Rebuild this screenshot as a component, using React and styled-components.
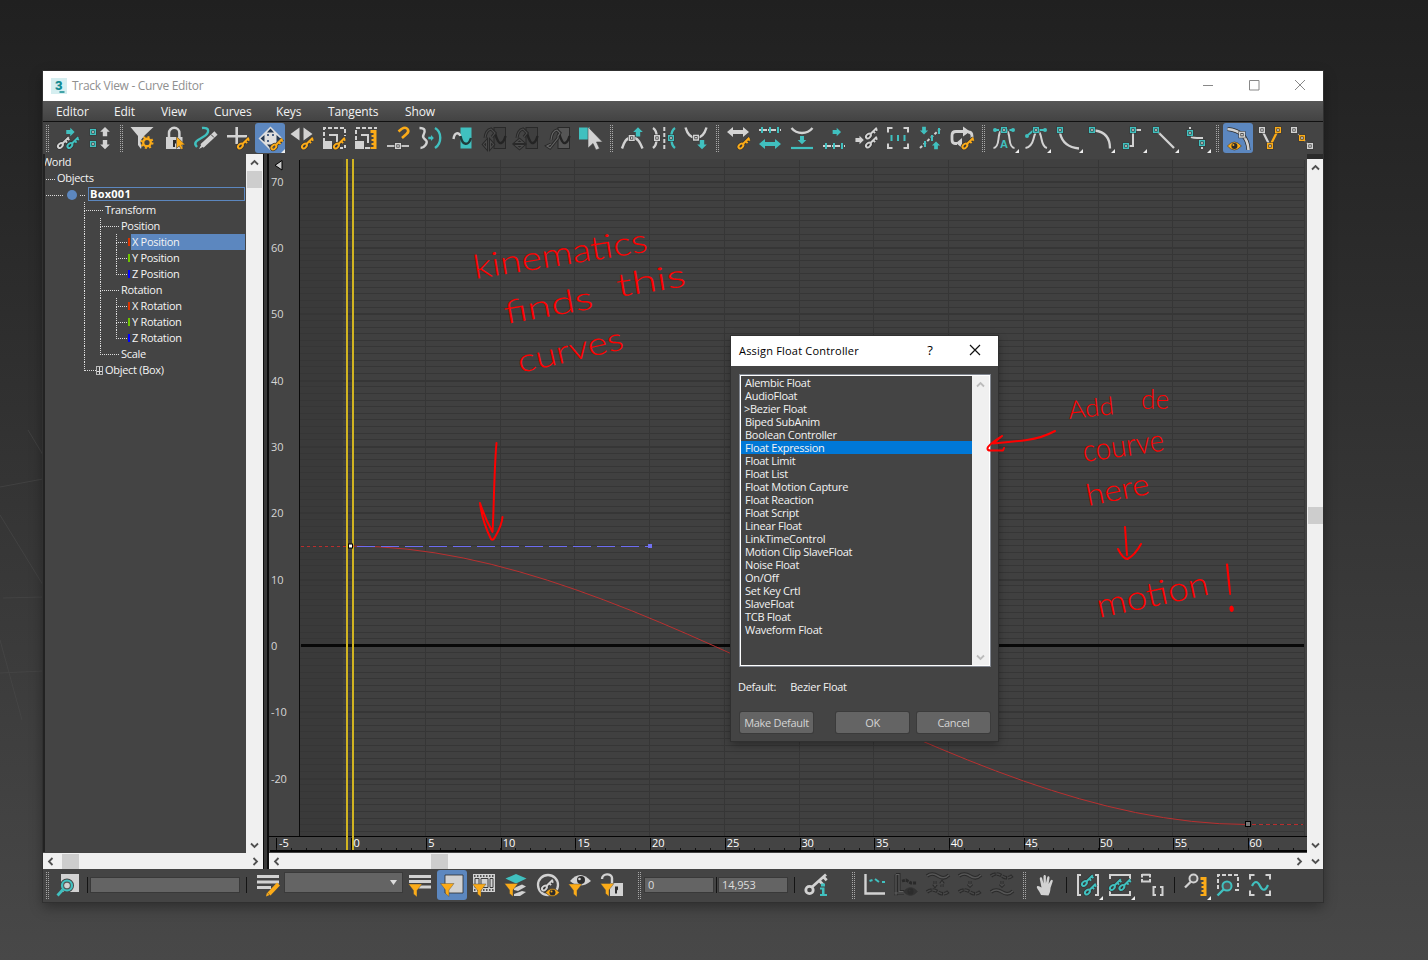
import React from "react";
import styled, { createGlobalStyle, css } from "styled-components";

const G = "#d2d2d2";
const T = "#40c0bf";
const O = "#fbab18";
const D = "#2c2c2c";
const UI = `"Open Sans", "Noto Sans", sans-serif`;

const Global = createGlobalStyle`
  html, body { margin: 0; padding: 0; overflow: hidden; }
  body { font-family: ${UI}; background: #333; }
  * { box-sizing: border-box; }
`;

const Desktop = styled.div`
  position: relative;
  width: 1428px;
  height: 960px;
  padding: 71px 0 0 43px;
  overflow: hidden;
  background: linear-gradient(#202020, #484848);
`;
const Overlay = styled.svg`
  position: absolute;
  left: 0;
  top: 0;
  pointer-events: none;
`;
const Window = styled.main`
  position: relative;
  display: flex;
  flex-direction: column;
  width: 1280px;
  height: 831px;
  background: #444;
  box-shadow: 0 0 0 1px #303030, 0 5px 12px rgba(0, 0, 0, 0.35);
`;
const TitleBar = styled.header`
  display: flex;
  align-items: center;
  height: 30px;
  padding: 0 17px 0 8px;
  background: #fff;
  color: #8f8f8f;
  font-size: 12px;
  letter-spacing: -0.3px;
`;
const Title = styled.span`
  flex: 1;
  padding: 0 0 2px 5px;
`;
const Caption = styled.div`
  display: flex;
  gap: 34px;
  padding-bottom: 2px;
`;
const MenuBar = styled.nav`
  display: flex;
  height: 21px;
  padding-left: 13px;
  border-bottom: 1px solid #111;
  background: linear-gradient(#565656, #434343);
  color: #f2f2f2;
  font-size: 12px;
  line-height: 21px;
  letter-spacing: -0.12px;
`;
const MenuItem = styled.span`
  width: ${(p) => p.$w}px;
`;
const Toolbar = styled.div`
  display: flex;
  align-items: center;
  flex: none;
  height: ${(p) => p.$h}px;
`;
const Tool = styled.div`
  width: 32px;
  height: 32px;
  flex: none;
  ${(p) =>
    p.$active &&
    css`
      background: #5c87bf;
      background-clip: content-box;
      padding: 1px;
      svg { margin: -1px; }
      border-radius: 4px;
    `}
  svg { display: block; }
`;
const Grip = styled.div`
  flex: none;
  width: 3px;
  height: 27px;
  margin: 0 ${(p) => p.$r}px 0 ${(p) => p.$l}px;
  border: 0 dotted #a8a8a8;
  border-width: 0 1px;
`;
const Divider = styled.div`
  flex: none;
  width: 1px;
  height: 16px;
  background: #141414;
  margin: 0 ${(p) => p.$r}px 0 ${(p) => p.$l}px;
`;
const Field = styled.div`
  flex: none;
  width: ${(p) => p.$w}px;
  height: 16px;
  background: #646464;
  border: 1px solid #393939;
  color: #ddd;
  font-size: 11px;
  line-height: 14px;
  padding-left: 3px;
  letter-spacing: -0.1px;
`;
const Combo = styled.div`
  display: flex;
  align-items: center;
  justify-content: flex-end;
  width: 119px;
  height: 21px;
  margin: -5px 1px 0 0;
  padding-right: 4px;
  background: #646464;
  border: 1px solid #3a3a3a;
`;
const Body = styled.div`
  display: flex;
  height: 715px;
`;
const Column = styled.div`
  display: flex;
  flex-direction: column;
  width: ${(p) => p.$w}px;
`;
const TreeArea = styled.div`
  display: flex;
  height: 699px;
`;
const Tree = styled.div`
  width: 203px;
  height: 698px;
  overflow: hidden;
  border-left: 2px solid #222;
  background: #444;
  color: #f4f4f4;
  font-size: 11px;
  letter-spacing: -0.3px;
`;
const TreeRow = styled.div`
  display: flex;
  height: 16px;
  line-height: 16px;
  padding-left: ${(p) => p.$pad}px;
  white-space: nowrap;
`;
const RootLabel = styled.span`
  margin-left: -3px;
`;
const GuideCell = styled.span`
  display: flex;
  flex-direction: column;
  width: ${(p) => p.$w || 16}px;
  span { height: 9px; border-left: 1px dotted #ddd; }
  span:first-child { ${(p) => p.$stub && "border-bottom: 1px dotted #ddd;"} }
  span:last-child { height: 7px; ${(p) => p.$last && "border-color: transparent;"} }
`;
const Label = styled.span`
  padding-left: ${(p) => p.$gap ?? 2}px;
`;
const Dots = styled.i`
  height: 1px;
  width: ${(p) => p.$w}px;
  margin: 9px 0 0 0;
  border-top: 1px dotted #ddd;
`;
const Track = styled.span`
  flex: 1;
  display: flex;
  height: 16px;
  padding-left: 1px;
  ${(p) => p.$on && css`
    background: #5c87bf;
    margin-right: 1px;
  `}
`;
const Swatch = styled.i`
  width: 2px;
  height: 8px;
  margin: 4px 1px 0 1px;
  background: ${(p) => p.$c};
`;
const Dot = styled.i`
  width: 10px;
  height: 10px;
  margin: 4px 3px 0 4px;
  border-radius: 50%;
  background: #5c87bf;
`;
const Named = styled.b`
  flex: 1;
  height: 14px;
  margin: 1px 1px 0 3px;
  padding-left: 1px;
  border: 1px solid #5c87bf;
  line-height: 12px;
  color: #fff;
  letter-spacing: 0.25px;
`;
const Expander = styled.i`
  display: flex;
  width: 7px;
  height: 9px;
  margin-top: 4px;
  border: 1px solid #bbb;
  &::before { content: ""; width: 5px; height: 4px; border-bottom: 1px solid #ddd; }
  &::after { content: ""; width: 1px; height: 7px; margin-left: -3px; background: #ddd; }
`;
const ScrollBar = styled.div`
  display: flex;
  flex: none;
  align-items: center;
  flex-direction: ${(p) => (p.$v ? "column" : "row")};
  justify-content: space-between;
  width: ${(p) => p.$w}px;
  height: ${(p) => p.$h}px;
  background: #f0f0f0;
  padding: ${(p) => (p.$v ? "4px 0 3px" : "0 3px")};
`;
const Thumb = styled.div`
  width: ${(p) => (p.$v ? 15 : 17)}px;
  height: ${(p) => (p.$v ? 17 : 15)}px;
  background: #cdcdcd;
  margin: ${(p) => (p.$v ? `${p.$at}px 0 auto` : `0 auto 0 ${p.$at}px`)};
`;
const Splitter = styled.div`
  width: 6px;
  background: #3a3a3a;
  border: 0 solid #0d0d0d;
  border-width: 0 2px 0 1px;
`;
const RightRail = styled.div`
  width: 16px;
  border-top: 5px solid #2b2b2b;
  background: #f0f0f0;
`;
const Dialog = styled.section`
  position: absolute;
  left: 731px;
  top: 336px;
  width: 267px;
  height: 405px;
  background: #444;
  box-shadow: 0 0 0 1px #303030, 0 3px 9px rgba(0, 0, 0, 0.4);
  color: #f3f3f3;
  font-size: 11px;
  letter-spacing: -0.27px;
`;
const DialogTitle = styled.div`
  display: flex;
  align-items: center;
  height: 30px;
  padding: 0 17px 2px 8px;
  background: #fff;
  color: #000;
  letter-spacing: 0.2px;
  span { flex: 1; }
  b { font-weight: 400; font-size: 13px; margin-right: 36px; }
`;
const ListFrame = styled.div`
  display: flex;
  width: 252px;
  height: 293px;
  margin: 8px 0 0 8px;
  border: 1px solid #828790;
  background: #fff;
  padding: 1px;
`;
const List = styled.ul`
  flex: 1;
  margin: 0;
  padding: 0;
  list-style: none;
  background: #444;
`;
const Item = styled.li`
  height: 13px;
  line-height: 13px;
  padding-left: ${(p) => (p.$mark ? 3 : 4)}px;
  white-space: nowrap;
  background: ${(p) => (p.$on ? "#0078d7" : "transparent")};
`;
const DefaultRow = styled.div`
  display: flex;
  gap: 14px;
  padding: 12px 0 0 7px;
  line-height: 16px;
`;
const Buttons = styled.div`
  display: flex;
  padding: 17px 0 0 9px;
`;
const Button = styled.button`
  width: 73px;
  height: 21px;
  padding: 0;
  margin-right: ${(p) => p.$r || 0}px;
  border: 0;
  border-radius: 2px;
  background: #646464;
  box-shadow: 0 0 0 1px #3b3b3b;
  color: #d4d4d4;
  font: 11px ${UI};
  letter-spacing: -0.3px;
`;

const Key = ({ x, y, c = O }) => (
  <g transform={`translate(${x} ${y})`} fill="none">
    {["#333", c].map((s, i) => (
      <g key={i} stroke={s} strokeWidth={i ? 2 : 3.4}>
        <ellipse cx="3.4" cy="9" rx="2.8" ry="1.9" transform="rotate(-45 3.4 9)" />
        <path d="M5.200 7.200L11.800 .7M8.200 4.200l1.900 1.900M10.600 1.900l1.700 1.700" />
      </g>
    ))}
  </g>
);
const Sq = ({ x, y, c = G, f = D }) => (
  <g>
    <rect x={x - 3.5} y={y - 3.5} width="7" height="7" fill={f} />
    <rect x={x - 2.3} y={y - 2.3} width="4.6" height="4.6" fill={f} stroke={c} strokeWidth="1.500" />
    <rect x={x - 0.8} y={y - 0.8} width="1.6" height="1.6" fill="#eee" />
  </g>
);
const Arrow = ({ x, y, r = 0, c = T, s = 1 }) => (
  <path transform={`translate(${x} ${y}) rotate(${r}) scale(${s})`} d="M-4.5-2.2H0V-4.8L4.8 0L0 4.8V2.2H-4.5z" fill={c} />
);
const Dbl = ({ y, c }) => (
  <path transform={`translate(16 ${y})`} d="M-11 0l6-5v3h10v-3l6 5-6 5v-3H-5v3z" fill={c} />
);
const L = ({ d, c = G, w = 2, ...r }) => <path d={d} fill="none" stroke={c} strokeWidth={w} {...r} />;
const F = ({ d, c = G, ...r }) => <path d={d} fill={c} {...r} />;
const Corner = () => <F d="M31 27v4h-4z" c="#eee" />;
const Funnel = ({ x = 4, y = 15 }) => <F d={`M${x} ${y}h13.500l-5 6.500v6.500l-3.500-3v-3.500z`} c={O} stroke="#444" strokeWidth=".4" />;
const EyeO = ({ x, y, c = O }) => (
  <g transform={`translate(${x} ${y})`}>
    <path d="M-7 0Q0-8 7 0Q0 8-7 0z" fill={c} stroke="#333" strokeWidth=".6" />
    <circle r="3" fill={D} /><circle cx="-1" cy="-1" r="1" fill={c} />
  </g>
);
const Seg = ({ y }) => (
  <g><L d={`M5 ${y}H27`} w="1.8" strokeDasharray="2 1 5 1" /><L d={`M8 ${y - 3}v6M16 ${y - 3}v6M24 ${y - 3}v6`} c={T} /></g>
);
const Ghost = ({ d, c = "#4b4b4b" }) => (<g><L d={d} c="#292929" w="3" /><L d={d} c={c} w="1.100" /></g>);
const Wave = ({ y, dash }) => {
  const d = `M5 ${y - 1}q5-4 11 0t11-1`;
  return <g><L d={d} c="#2a2a2a" w="3.6" strokeDasharray={dash ? "5 1" : undefined} /><L d={d} c={dash ? "#484848" : "#555"} w="1.6" strokeDasharray={dash ? "4 2" : undefined} /></g>;
};
const Snap = ({ fill }) => (<>
  <rect x="16" y="5.5" width="11.5" height="21" fill={fill} stroke="#292929" />
  <L d="M17 11q3 11 6 10t4.500-7" c="#242424" w="2.4" />
</>);

const I = {
  assign: <><Arrow x={19.3} y={10} s={0.9} /><Key x={6} y={14.5} c={G} /><Key x={15.5} y={14.5} c={T} /></>,
  filters: <><Sq x={10} y={10} c={T} /><Sq x={10} y={22} c={T} /><Arrow x={22} y={9.7} r={-90} c={G} /><Arrow x={22} y={22.5} r={90} c={G} /></>,
  gear: <><F d="M4.5 5h23L18 14l-3 13-3-4v-9z" /><circle cx="21" cy="20.5" r="6.5" fill="#444" /><circle cx="21" cy="20.5" r="3.8" fill="none" stroke={O} strokeWidth="2.4" /><circle cx="21" cy="20.5" r="5.5" fill="none" stroke={O} strokeWidth="2" strokeDasharray="2 2.3" /></>,
  lock: <><L d="M11 15v-4a5.2 5.2 0 0 1 10.400 0v4" w="2.5" /><F d="M8 15h16.500v12H8z" /><F d="M15 18h3v3l-1 1v3h-2z" c={D} /><F d="M18.500 14.500v12l2.700-2.600 2 3.600 2-1-1.700-3.500 3.800-.2z" c={O} stroke={D} strokeWidth=".5" /></>,
  draw: <><L d="M12 6c8-1 8 5 1 9s-10 6-6 10" c={T} w="2.4" /><L d="M26 11L12 24" w="4.6" /><F d="M12.500 20.500l3 3-6.500 3.500z" /><L d="M21 12.500l3 3" c="#444" w="1" /></>,
  add: <><L d="M14.700 5v17M5 14.300h20" w="2.6" /><Key x={15} y={15} /></>,
  move: <><F d="M16.500 4.500l12 12-12 12-12-12z" c="#dedede" /><F d="M13 10.500l3.500-4 3.500 4zM10.500 13l-4 3.500 4 3.500zM22.500 13l4 3.500-4 3.500zM13 22.500l3.500 4 3.500-4z" c="#26384f" /><L d="M13 13h2M18 13h2M13 19h2" c="#4b6285" /><Key x={16.500} y={16} /><Corner /></>,
  slide: <><F d="M13.500 5.500v13l-9-6.500zM17.500 5.500v13l9-6.500z" /><Key x={15} y={15} /></>,
  scale: <><L d="M6 20V6H27V14" strokeDasharray="4 2" /><F d="M5 19h9v8H5z" /><L d="M11 13h8v8" /><L d="M22 26h5v-3" strokeDasharray="3 2" /><Key x={15} y={15} /></>,
  scaleVal: <><L d="M6 18V6H27" strokeDasharray="4 2" /><F d="M5 19h9v8H5z" /><L d="M11 13h7v8" /><L d="M15 26h5" /><path d="M20.500 8h6v19h-6v-2h3v-2h-2v-2h2v-2h-2v-2h2v-2h-2v-2h2v-2h-3z" fill={O} /></>,
  snap: <><L d="M16.500 9.500l3-2.500q4-2.500 6 0t-1 5l-4.500 4" c={O} w="2.6" /><L d="M5 24h22" w="1.8" /><Sq x={16} y={24} /></>,
  ooR: <><L d="M5.500 6c6 0 6 3 4 7-2 3 2 4 3 6s-2 7-6 7" w="2.400" /><Arrow x={17} y={16} s={0.6} /><L d="M21 6c7 4 7 15 0 20" c={T} w="2.400" /></>,
  region: <><F d="M14.500 5.500h11v21h-11z" c={T} /><L d="M7.500 17c1-7 5-7 7-3" w="2.4" c={G} /><L d="M14.500 14c2 10 8 10 10.500 2" c="#1f3c3c" w="2.4" /></>,
  d1: <><Snap fill="#3f3f3f" /><Ghost d="M7 16q1-8 6-9l4 4-3 4" /><Ghost d="M8.500 19l-3 3.500 3 3.500zM12.500 19l3 3.500-3 3.500z" /></>,
  d2: <><Snap fill="#3f3f3f" /><Ghost d="M7 16q1-8 6-9l4 4-3 4" /><Ghost d="M6 20.500l3.500-3 3.500 3zM6 23.500l3.500 3 3.500-3z" /></>,
  d3: <><Snap fill="#565656" /><Ghost c="#666" d="M9 18q1-9 6-10l3 3-2 3v2L8 26l-3-2 4-2" /></>,
  sel: <><F d="M5 5.500h11v12H5z" c={T} /><F d="M14 5v21l5-4.500 3 6.500 3.500-1.500-3-6.500h6z" stroke="#444" strokeWidth=".6" /></>,
  t1: <><L d="M6 26.500c2-6 4-11 10-11s8 5 10.500 11" w="2.4" /><Sq x={15.7} y={16} /><Arrow x={22} y={10} r={-90} /></>,
  t2: <><L d="M5 6c5 3 5 16 0 20" w="2.4" /><Sq x={9} y={16} /><L d="M16.300 5v22" strokeDasharray="4 2" /><L d="M27 6c-5 3-5 16 0 20" c={T} w="2.400" /><Sq x={23} y={16} c={T} /></>,
  t3: <><L d="M5.500 5.500q3 10.500 10.500 10.500t10.500-10.500" w="2.400" /><Sq x={16} y={15.700} /><Arrow x={22} y={22.500} r={90} /></>,
  hs: <><Dbl y={10} c={G} /><Key x={15.500} y={15} /></>,
  al: <><Seg y={8} /><Dbl y={22} c={T} /></>,
  ground: <><L d="M5.500 6q4 5 10.500 5T26.500 6" w="2.300" /><Arrow x={16} y={18} r={90} s={0.9} /><L d="M5 26h22" c={T} w="2.200" /></>,
  shift: <><Arrow x={18.700} y={10} s={0.9} /><Seg y={24} /></>,
  keys: <><Arrow x={9.500} y={18} c={G} s={0.9} /><Key x={15} y={5} c={G} /><Key x={15} y={14} c={G} /></>,
  frame3: <><L d="M10.500 6H6v4.500M21.500 6H26v4.500M10.500 26H6v-4.500M21.500 26H26v-4.500" /><L d="M9.500 13v6M16 13v6M22.500 13v6" c={T} /></>,
  rand: <><Arrow x={10} y={8.500} r={90} s={0.85} /><Arrow x={22} y={23.500} r={-90} s={0.85} /><L d="M6 26L26 7" w="2" strokeDasharray="3 2" /><L d="M11 19v6M18 13v6M25 6v6" c={T} /></>,
  loop: <><L d="M11 21.500H9q-3 0-3-4v-4q0-4 4-4h8M22 10q4 0 4 4v4" w="2.800" /><F d="M17 4.500l7 5-7 5zM16 16l-6 5 6 5z" /><Key x={15.500} y={15} /></>,
  auto: <><L d="M8 8h16" c={T} strokeDasharray="3 1.500" /><circle cx="7" cy="8" r="2" fill={T} /><circle cx="25" cy="8" r="2" fill={T} /><L d="M5.500 26q4 0 5-9t3-7M26.500 26q-4 0-5-9t-3-7" /><Sq x={16} y={8} c={T} /><text x="16" y="26" textAnchor="middle" fontFamily="Liberation Sans, sans-serif" fontWeight="bold" fontSize="11" fill={T}>A</text><Corner /></>,
  spline: <><L d="M8 13l6-5h10" c={T} /><circle cx="7" cy="14" r="2" fill={T} /><circle cx="25" cy="8" r="2" fill={T} /><L d="M5.500 26q6-1 8-9t3-7M27 26q-4-1-5.500-9t-3.500-7" /><Sq x={16} y={8} c={T} /><Corner /></>,
  fast: <><L d="M8 11q3 14 19 15.500" w="2.300" /><Sq x={8} y={8} c={T} /><Corner /></>,
  slow: <><L d="M11 8.500q15 2 15 18" w="2.300" /><Sq x={8} y={8} c={T} /><Corner /></>,
  step: <><L d="M20 8h5M17 11v13h-4" /><Sq x={17} y={8} c={T} /><Sq x={10} y={24} c={T} /><Corner /></>,
  linear: <><L d="M10 10l16 16" w="2.300" /><Sq x={8} y={8} c={T} /><Corner /></>,
  smooth: <><L d="M10 5v2M11 15q3 1 6 1h6M22 25v2" /><Sq x={10} y={11} c={T} /><Sq x={22} y={21} c={T} /><Corner /></>,
  show: <><L d="M5.500 7q20 2 21 21" c={D} w="4" /><L d="M5.500 7q20 2 21 21" w="2.600" /><Sq x={20} y={12.700} /><EyeO x={12.400} y={24} /></>,
  tanv: <><L d="M9 10l6 12" w="2.200" /><L d="M23 10l-6 12" c={O} w="2.200" /><Sq x={8} y={8} /><Sq x={24} y={8} c={O} /><Sq x={16} y={24} c={O} /></>,
  lockT: <><L d="M8 8l16 16" w="1.500" strokeDasharray="1 2" /><Sq x={8} y={8} /><Sq x={16} y={16} c={O} /><Sq x={24} y={24} /></>,

  zoomSel: <><F d="M9 5h18v18H9z" /><circle cx="15" cy="16.500" r="5" fill="#c9d5d5" stroke="#444" strokeWidth="4" /><circle cx="15" cy="16.500" r="5" fill="#555" stroke={T} strokeWidth="2.200" /><circle cx="15" cy="16.500" r="2.800" fill={G} /><L d="M11 20.500L5.500 26.500" c={T} w="2.800" /></>,
  edit: <><F d="M5 6h22v3H5zM5 11.500h22v3H5zM5 17h14v3H5z" /><L d="M26.500 15L17 25" c={O} w="4" /><F d="M15 23.500l2.500 2.500-3.500 1.500z" c={O} /></>,
  fList: <><F d="M5 6h22v3H5zM5 11h22v3H5zM14 16.500h13v3H14z" /><Funnel x={4.500} /></>,
  fSel: <><F d="M9 6h18v18H9z" stroke={D} strokeWidth=".8" /><Funnel x={4.500} y={14.500} /></>,
  fAnim: <><F d="M5 5h22v18H5z" /><L d="M6 7h20M6 21h20" c={D} strokeDasharray="1.500 1.500" w="1.400" /><F d="M7 9.500h4v9H7zM13 9.500h7v9h-7zM22 9.500h3v9h-3z" c="#d2d2d2" stroke={D} strokeWidth=".9" /><Funnel x={4.500} /></>,
  fLayer: <><F d="M5.500 9.500L16 5l10.500 4.500L16 14.500z" c={T} /><F d="M14 19l8-3.500 4 2-8 4.500-4-1zM14 25l8-3 4 1-6 4h-6z" /><Funnel x={4.500} y={14.500} /></>,
  fKey: <><circle cx="16" cy="16" r="10" fill="none" stroke={G} strokeWidth="2.300" /><Key x={9} y={10} c={G} /><EyeO x={20.500} y={23.500} c={O} /></>,
  fEye: <><F d="M6 12Q16 0 27 12Q16 21 6 12z" /><circle cx="17" cy="11" r="4" fill={D} /><circle cx="15.500" cy="10" r="1.300" fill={G} /><Funnel x={4.500} /></>,
  fLock: <><L d="M6 10c0-6 10-6 10-1v5" w="2.400" /><F d="M14 14h13v13H14z" /><F d="M19 17.500h3v3l-1 1v3h-2z" c={D} /><Funnel x={4.500} y={14.500} /></>,
  info: <><circle cx="9.500" cy="21" r="3.700" fill="none" stroke={G} strokeWidth="2.800" /><L d="M12 18L26 5.500M19.500 12l3.500 3.500M23.500 8l3.200 3.200" w="2.800" /><F d="M21 14.500h4v3h-4zM20 18.500h4.500v6.500H27v2h-7v-2h2v-4.500h-2z" c={T} /></>,
  g1: <><L d="M7.500 5v19.500H27" w="2.400" /><L d="M11.500 12l3-1M17 10l4 3M24 13h3" c={T} /></>,
  g2: <><Ghost c="#606060" d="M6 5.500h3v17h5M4.500 24h9.500M6 5.500v21" /><L d="M12 12l4-1 5 3h6" c="#292929" w="2.800" strokeDasharray="3 1" /><EyeO x={20.500} y={22.500} c="#333" /></>,
  g3: <><Wave y={8} /><Ghost d="M13 12v5M11.500 15l1.500 2 1.500-2M20 18v-5M18.500 15l1.500-2 1.500 2" /><Wave y={24} dash /></>,
  g4: <><Wave y={8} /><Ghost d="M16 12v5M14 15l2 2 2-2" /><Wave y={24} dash /></>,
  g5: <><Wave y={8} dash /><Ghost d="M16 12v5M14 15l2 2 2-2" /><Wave y={24} /></>,
  hand: <F d="M12 26c-2-5-5-7-4-8.500s4 1 4.500 1L10.800 10c-.3-2 2-2.200 2.400-.5l1.300 5V7.500c0-2 2.300-2 2.400 0v7l1.300-6c.4-1.800 2.600-1.300 2.300.5L19.600 15l2-3.500c1-1.500 2.800-.5 2 1.200L21.500 19c-.3 5-1.500 6-2 7.500z" />,
  fit: <><L d="M9 6H6v20h3M23 6h3v20h-3" /><Key x={9} y={5.500} c={T} /><Key x={12} y={14} c={T} /><Corner /></>,
  fitV: <><L d="M6 10V6h20v4M6 22v4h20v-4" /><Key x={5} y={9.500} c={T} /><Key x={14.500} y={9.500} c={T} /><Corner /></>,
  box2: <><path d="M6 5.800h8M6 12.500h8M6 5v3.500M14 5v3.500M6 10v3.500M14 10v3.500" stroke={G} strokeWidth="2" /><L d="M20 18h-2.500v8H20M24 18h2.500v8H24" /></>,
  zoomR: <><circle cx="13.500" cy="9.500" r="4" fill="#555" stroke={G} strokeWidth="2" /><L d="M10.500 13L5 18.500" w="2.300" /><path d="M20.500 8h6v19h-6v-2h3v-2h-2v-2h2v-2h-2v-2h2v-2h-2v-2h2v-2h-3z" fill={O} /><Corner /></>,
  zoomReg: <><L d="M6 20V6h20v15h-5" strokeDasharray="4 2" /><circle cx="15" cy="17" r="4.500" fill="#555" stroke={T} strokeWidth="2" /><L d="M11.500 20.500L5.500 26.500" c={T} w="2.400" /></>,
  iso: <><L d="M10.500 6H6v4.500M21.500 6H26v4.500M10.500 26H6v-4.500M21.500 26H26v-4.500" /><L d="M8 17q4-8 8 0t8-1" c={T} w="2.200" /></>,
};

const Tools = ({ names, active }) =>
  names.split(" ").map((n) => (
    <Tool key={n} $active={active === n}>
      <svg width="32" height="32">{I[n]}</svg>
    </Tool>
  ));

const Chevron = ({ dir, c = "#505050" }) => (
  <svg width="9" height="9" viewBox="-4.500 -4.500 9 9">
    <path transform={`rotate(${dir})`} d="M-3.500 2L0-1.500L3.500 2" fill="none" stroke={c} strokeWidth="1.800" />
  </svg>
);

const vlines = [425.5, 500.5, 574.5, 649.5, 724.5, 799.5, 873.5, 948.5, 1023.5, 1098.5, 1172.5, 1247.5];
const yOf = (v) => 646 - v * 6.635;
const rows = Array.from({ length: 101 }, (_, i) => i - 28).filter((v) => v <= 73);
const Dashes = ({ from, to, y, on, off, c }) =>
  Array.from({ length: Math.ceil((to - from) / (on + off)) }, (_, i) => from + i * (on + off)).map((x) => (
    <rect key={x} x={x} y={y} width={Math.min(on, to - x)} height="1" fill={c} />
  ));

const Graph = () => (
  <svg width="1038" height="699" viewBox="269 154 1038 699" fontFamily={UI} fontSize="11" letterSpacing="-.15">
    <rect x="269" y="154" width="1038" height="699" fill="#444" />
    <rect x="300" y="159" width="1004" height="677" fill="#404040" />
    <rect x="300" y="159" width="43" height="677" fill="#3a3a3a" />
    <g shapeRendering="crispEdges">
      {rows.map((v) => (
        <rect key={v} x="300" width="1004" y={Math.round(yOf(v)) - 1} height={v % 10 ? 1 : 2} fill="#363636" />
      ))}
      {vlines.map((x) => <path key={x} d={`M${x} 160V836`} stroke="#363636" />)}
      <path d="M1304.500 160V836" stroke="#383838" />
      <path d="M299.500 160V836" stroke="#0a0a0a" />
      <rect x="301" y="644" width="1003" height="3" fill="#080808" />
      <rect x="270" y="837" width="1037" height="14" fill="#444" />
      <path d="M269 836.500H1307" stroke="#050505" strokeWidth="1" />
      <rect x="270" y="850" width="1037" height="2" fill="#050505" />
      {[276.5, 351.5, ...vlines.map((x) => x + 1)].map((x) => <path key={x} d={`M${x} 838V850`} stroke="#050505" />)}
      {Array.from({ length: 69 }, (_, i) => (
        <rect key={i} x={Math.round(276 + i * 14.95)} y="848" width="1" height="2" fill="#111" />
      ))}
      <rect x="346" y="159" width="2" height="691" fill="#d1b421" />
      <rect x="352" y="159" width="2" height="691" fill="#d1b421" />
    </g>
    {[70, 60, 50, 40, 30, 20, 10, 0, -10, -20].map((v) => (
      <text key={v} x="271" y={yOf(v) + 4} fill="#d6d6d6">{v}</text>
    ))}
    {[-5, 0, 5, 10, 15, 20, 25, 30, 35, 40, 45, 50, 55, 60].map((v) => (
      <text key={v} x={v === -5 ? 279 : 353.5 + v * 14.93} y="847" fill="#fff">{v}</text>
    ))}
    <path d="M282 160.500v9.500l-7-4.700z" fill="#ccc" stroke="#000" />
    <Dashes from={301} to={348} y={546} on={3} off={3} c="#b92e2e" />
    <path d="M351 546C650 546 949 824.500 1247.500 824.500" fill="none" stroke="#b93030" strokeWidth="1" />
    <Dashes from={1252} to={1303} y={824} on={4} off={3} c="#b92e2e" />
    <Dashes from={357} to={649} y={546} on={18} off={6} c="#6d6df2" />
    <rect x="648" y="544" width="4" height="4" fill="#7070f0" />
    <rect x="348.500" y="544" width="4" height="4" fill="#fff" stroke="#000" />
    <rect x="1245.500" y="821.500" width="5" height="5" fill="#777" stroke="#000" />
  </svg>
);

const Guide = (p) => <GuideCell {...p}><span /><span /></GuideCell>;
const Channel = ({ name, color, last, on }) => (
  <TreeRow $pad={39}>
    <Guide /><Guide />
    <Guide $w={11} $stub $last={last} />
    <Swatch $c={color} />
    <Track $on={on}>{name}</Track>
  </TreeRow>
);

const controllers = ["Alembic Float", "AudioFloat", ">Bezier Float", "Biped SubAnim", "Boolean Controller", "Float Expression", "Float Limit", "Float List", "Float Motion Capture", "Float Reaction", "Float Script", "Linear Float", "LinkTimeControl", "Motion Clip SlaveFloat", "Noise Float", "On/Off", "Set Key Crtl", "SlaveFloat", "TCB Float", "Waveform Float"];

const notes = [
  ["kinematics", 475, 279, -9, 176, 33],
  ["finds", 506, 324, -10, 90, 32],
  ["this", 618, 297, -9, 70, 32],
  ["curves", 520, 373, -13, 108, 32],
  ["Add", 1069, 419, -6, 46, 25],
  ["de", 1141, 409, 0, 28, 27],
  ["courve", 1084, 462, -8, 82, 31],
  ["here", 1088, 506, -11, 64, 30],
  ["motion", 1099, 618, -12, 114, 34],
  ["!", 1226, 612, -6, 12, 68],
];

export default function App() {
  return (
    <Desktop>
      <Global />
      <Overlay width="1428" height="960" stroke="#4a4a4a" strokeWidth="1" fill="none" opacity=".6">
        <path d="M0 487L43 479M3 598L43 597M0 673L43 671M28 430L43 455M0 515L43 585M0 640L22 720" />
      </Overlay>
      <Window>
        <TitleBar>
          <svg width="16" height="16">
            <rect width="16" height="16" fill="#d5eef0" />
            <text x="4" y="11.500" fontFamily="Roboto, sans-serif" fontWeight="900" fontSize="13" fill="#118a91">3</text>
            <path d="M8.500 14h5" stroke="#118a91" strokeWidth="1.500" />
          </svg>
          <Title>Track View - Curve Editor</Title>
          <Caption>
            <svg width="12" height="12"><path d="M1 6.500h10" stroke="#888" /></svg>
            <svg width="12" height="12"><path d="M1.500 1.500h9.500v9.500h-9.500z" fill="none" stroke="#888" /></svg>
            <svg width="12" height="12"><path d="M1 1l10 10M11 1L1 11" stroke="#888" /></svg>
          </Caption>
        </TitleBar>
        <MenuBar>
          {[["Editor", 58], ["Edit", 47], ["View", 53], ["Curves", 62], ["Keys", 52], ["Tangents", 77], ["Show", 50]].map(([t, w]) => (
            <MenuItem key={t} $w={w}>{t}</MenuItem>
          ))}
        </MenuBar>
        <Toolbar $h={32}>
          <Grip $l={3} $r={2} />
          <Tools names="assign filters" />
          <Grip $l={5} $r={3} />
          <Tools names="gear lock draw add move slide scale scaleVal snap ooR region d1 d2 d3 sel" active="move" />
          <Grip $l={4} $r={3} />
          <Tools names="t1 t2 t3" />
          <Grip $l={4} $r={3} />
          <Tools names="hs al ground shift keys frame3 rand loop" />
          <Grip $l={4} $r={3} />
          <Tools names="auto spline fast slow step linear smooth" />
          <Grip $l={4} $r={3} />
          <Tools names="show tanv lockT" active="show" />
        </Toolbar>
        <Body>
          <Column $w={220}>
            <TreeArea>
              <Tree>
                <TreeRow $pad={0}><RootLabel>World</RootLabel></TreeRow>
                <TreeRow $pad={1}><Dots $w={9} /><Label>Objects</Label></TreeRow>
                <TreeRow $pad={1}>
                  <Dots $w={17} /><Dot /><Dots $w={5} /><Named>Box001</Named>
                </TreeRow>
                <TreeRow $pad={39}><Guide $w={19} $stub /><Label>Transform</Label></TreeRow>
                <TreeRow $pad={39}><Guide /><Guide $w={19} $stub /><Label>Position</Label></TreeRow>
                <Channel name="X Position" color="#d93400" on />
                <Channel name="Y Position" color="#6fc400" />
                <Channel name="Z Position" color="#0000ff" last />
                <TreeRow $pad={39}><Guide /><Guide $w={19} $stub /><Label>Rotation</Label></TreeRow>
                <Channel name="X Rotation" color="#d93400" />
                <Channel name="Y Rotation" color="#6fc400" />
                <Channel name="Z Rotation" color="#0000ff" last />
                <TreeRow $pad={39}><Guide /><Guide $w={19} $stub $last /><Label>Scale</Label></TreeRow>
                <TreeRow $pad={39}><Guide $w={12} $stub $last /><Expander /><Label>Object (Box)</Label></TreeRow>
              </Tree>
              <ScrollBar $v $w={17} $h={699}>
                <Chevron dir={0} /><Thumb $v $at={4} /><Chevron dir={180} />
              </ScrollBar>
            </TreeArea>
            <ScrollBar $w={220} $h={16}>
              <Chevron dir={-90} /><Thumb $at={7} /><Chevron dir={90} />
            </ScrollBar>
          </Column>
          <Splitter />
          <Column $w={1038}>
            <Graph />
            <ScrollBar $w={1038} $h={16}>
              <Chevron dir={-90} /><Thumb $at={150} /><Chevron dir={90} />
            </ScrollBar>
          </Column>
          <RightRail>
            <ScrollBar $v $w={16} $h={694}>
              <Chevron dir={0} /><Thumb $v $at={335} /><Chevron dir={180} />
            </ScrollBar>
            <ScrollBar $v $w={16} $h={16}><Chevron dir={180} /></ScrollBar>
          </RightRail>
        </Body>
        <Toolbar $h={32}>
          <Grip $l={3} $r={3} />
          <Tools names="zoomSel" />
          <Divider $l={3} $r={2} />
          <Field $w={150} />
          <Divider $l={6} $r={5} />
          <Tools names="edit" />
          <Combo><svg width="8" height="6"><path d="M0 0h7L3.500 5z" fill="#ddd" /></svg></Combo>
          <Tools names="fList fSel fAnim fLayer fKey fEye fLock" active="fSel" />
          <Grip $l={10} $r={3} />
          <Field $w={70}>0</Field>
          <Divider $l={2} $r={1} />
          <Field $w={70}>14,953</Field>
          <Divider $l={6} $r={5} />
          <Tools names="info" />
          <Grip $l={20} $r={3} />
          <Tools names="g1 g2 g3 g4 g5" />
          <Grip $l={5} $r={3} />
          <Tools names="hand" />
          <Divider $l={5} $r={5} />
          <Tools names="fit fitV box2" />
          <Divider $l={6} $r={5} />
          <Tools names="zoomR zoomReg iso" />
        </Toolbar>
      </Window>
      <Dialog>
        <DialogTitle>
          <span>Assign Float Controller</span><b>?</b>
          <svg width="12" height="12"><path d="M1 1l10 10M11 1L1 11" stroke="#111" strokeWidth="1.200" /></svg>
        </DialogTitle>
        <ListFrame>
          <List>
            {controllers.map((c) => (
              <Item key={c} $mark={c[0] === ">"} $on={c === "Float Expression"}>{c}</Item>
            ))}
          </List>
          <ScrollBar $v $w={17} $h={289}><Chevron dir={0} c="#bcbcbc" /><Chevron dir={180} c="#bcbcbc" /></ScrollBar>
        </ListFrame>
        <DefaultRow><span>Default:</span><span>Bezier Float</span></DefaultRow>
        <Buttons>
          <Button $r={23}>Make Default</Button><Button $r={8}>OK</Button><Button>Cancel</Button>
        </Buttons>
      </Dialog>
      <Overlay width="1428" height="960" fill="#ff0000" fontFamily="Lato, sans-serif" fontWeight="300">
        {notes.map(([t, x, y, r, w, s]) => (
          <text key={t} transform={`translate(${x} ${y}) rotate(${r})`} textLength={w} lengthAdjust="spacingAndGlyphs" fontSize={s}>{t}</text>
        ))}
        <g fill="none" stroke="#ff0000" strokeWidth="2" strokeLinecap="round" strokeLinejoin="round">
          <path d="M496.500 443C494 470 494 510 492.500 532C488 524 483 512 480 503C482 520 488 533 491 539Q493 541 495 537Q502 525 502.500 517" />
          <path d="M1055 431Q1042 438 1027 440T993 443.500L1002 436Q992 442 988 447Q986 451 992 450.500H1003L1004 448" />
          <path d="M1125 527L1127 555M1118 549Q1123 559 1127.500 559Q1135 555 1141 544" />
        </g>
      </Overlay>
    </Desktop>
  );
}
